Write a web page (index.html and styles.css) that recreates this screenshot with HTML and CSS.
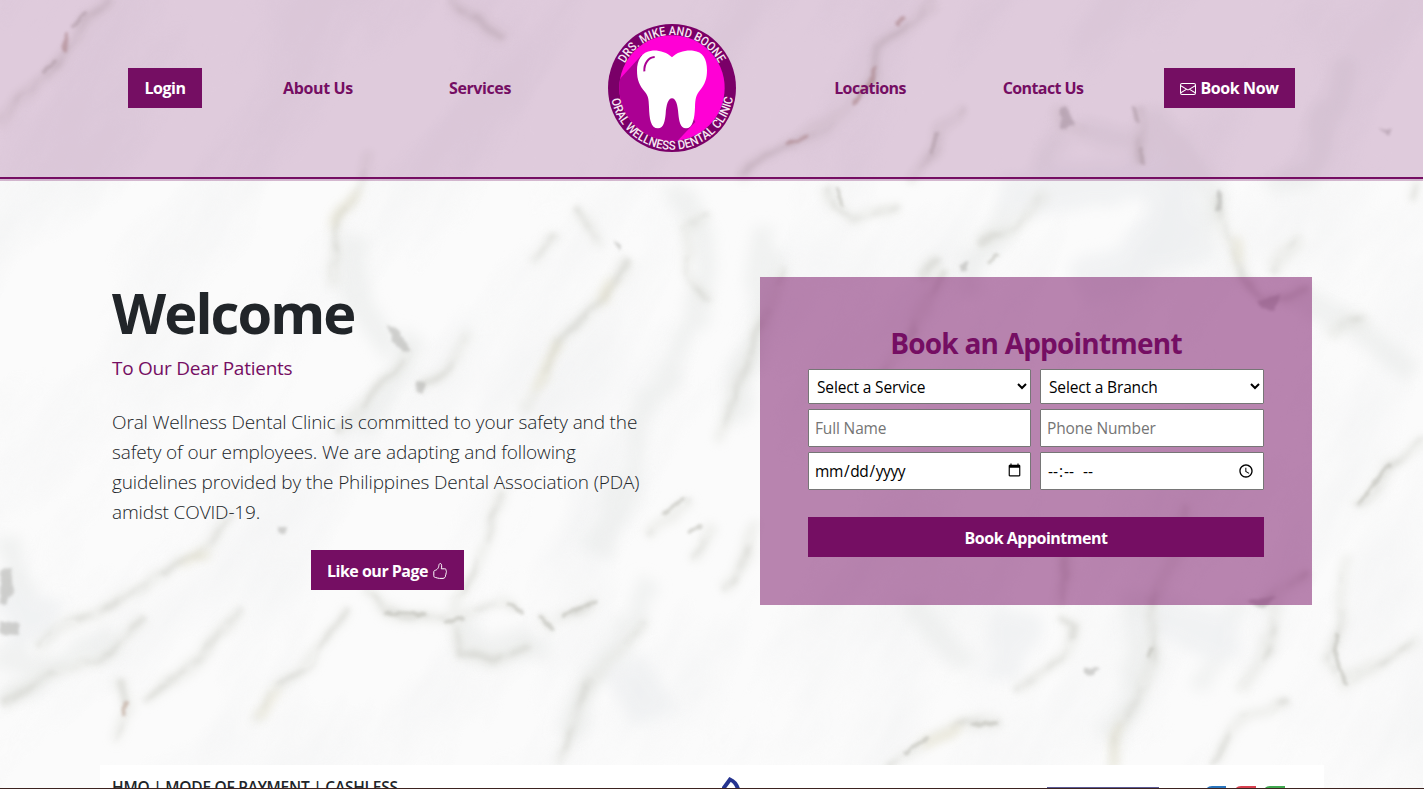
FILE: index.html
```html
<!DOCTYPE html>
<html lang="en-US">
<head>
<meta charset="utf-8">
<title>Oral Wellness Dental Clinic</title>
<link rel="stylesheet" href="styles.css">
</head>
<body>
<svg class="marble" viewBox="0 0 1424 789" preserveAspectRatio="none" aria-hidden="true">
  <defs>
    <filter id="haze" x="-10%" y="-10%" width="120%" height="120%"><feTurbulence type="fractalNoise" baseFrequency=".018" numOctaves="3" seed="4"/><feDisplacementMap in="SourceGraphic" scale="34"/><feGaussianBlur stdDeviation="7"/></filter>
    <filter id="vein" x="-10%" y="-10%" width="120%" height="120%">
      <feTurbulence type="fractalNoise" baseFrequency=".022" numOctaves="3" seed="9" result="n"/>
      <feDisplacementMap in="SourceGraphic" in2="n" scale="16" xChannelSelector="R" yChannelSelector="G"/>
      <feGaussianBlur stdDeviation="2.4" result="v"/>
      <feColorMatrix in="n" type="matrix" values="0 0 0 0 0  0 0 0 0 0  0 0 0 0 0  0 0 4.5 0 -1.75" result="m"/>
      <feComposite in="v" in2="m" operator="in"/>
    </filter>
    <filter id="halo" x="-10%" y="-10%" width="120%" height="120%"><feTurbulence type="fractalNoise" baseFrequency=".022" numOctaves="3" seed="9" result="n"/><feDisplacementMap in="SourceGraphic" in2="n" scale="20" xChannelSelector="R" yChannelSelector="G"/><feGaussianBlur stdDeviation="5"/></filter>
    <filter id="cloud" x="0" y="0" width="100%" height="100%"><feTurbulence type="fractalNoise" baseFrequency=".004 .012" numOctaves="4" seed="12"/><feColorMatrix type="matrix" values="0 0 0 0 .83  0 0 0 0 .84  0 0 0 0 .85  0 1.5 0 0 -.64"/></filter>
    <filter id="speck" x="-10%" y="-10%" width="120%" height="120%"><feTurbulence type="fractalNoise" baseFrequency=".09" numOctaves="2" seed="2" result="n"/><feDisplacementMap in="SourceGraphic" in2="n" scale="6" xChannelSelector="R" yChannelSelector="G"/><feGaussianBlur stdDeviation="1.4"/></filter>
  </defs>
  <rect width="1424" height="789" fill="#fbfbfb"/>
  <g transform="rotate(-58 712 394)"><rect x="-200" y="-500" width="1824" height="1800" filter="url(#cloud)" opacity=".7"/></g>
  <g class="haze" filter="url(#haze)">
    <path d="M350 230L355 300 390 350M680 190L705 240 695 330 640 420 600 560M420 340L360 430M770 230L760 330 730 420M1150 110L1220 200 1180 260M1060 130L1000 230 960 290M1290 290L1360 330 1410 370M10 540L20 600 5 660 60 665M650 580L600 660 570 740M460 620L480 650 550 650M1130 590L1150 660 1110 740M1240 600L1200 690M910 600L960 660M1270 190L1310 170 1350 60M1080 130L1180 150M0 700L120 640"/>
    <path class="deep" d="M1000 190L1170 180 1180 240 1080 290M1140 610L1240 640M620 660L660 720M0 610L60 620M1020 610L1000 680"/>
  </g>
  <g class="halo" filter="url(#halo)"><use href="#lines"/></g>
  <g class="vein" filter="url(#vein)"><g id="lines">
    <path d="M112 0L85 22 66 50 48 70 25 97 0 125M450 0L480 18 502 40M368 150L360 190 340 220 332 285M410 350L375 395 335 430M475 338L445 370 420 390M555 235L528 262M580 208L602 250M632 262L600 302 560 340 540 385 520 410M712 210L685 230 690 270 705 302"/>
    <path d="M938 0L905 22 880 50 874 78 850 108 835 123 800 140 770 158 740 180M968 108L945 125 930 160 910 182M1062 105L1062 128 1085 130M1140 105L1143 165M828 188L832 210 850 220 900 205M1045 192L1015 225 980 248M942 258L922 274M1222 195L1225 235 1235 262 1260 300 1312 290M1304 240L1272 272M1330 340L1345 325 1370 318M1422 180L1415 205M945 270L900 350 870 400M785 270L760 330 742 385 714 440"/>
    <path d="M235 515L200 555 140 588 90 618 35 645M0 700L60 668 110 652 145 615M120 680L125 712 112 740M140 702L200 662 240 608M348 608L310 665 272 690 252 722M365 590L385 612 430 614 455 620 510 602 522 613M540 615L555 628M560 616L597 602M505 490L480 550 460 600 456 625 462 657 492 660 530 645M690 500L650 540M645 625L600 660 575 715 560 765M712 520L690 560"/>
    <path d="M1424 440L1396 465 1360 507M1350 560L1342 590 1338 640 1330 660 1345 683 1382 665 1424 638M1150 600L1155 650 1140 690 1125 720 1108 765M1002 722L960 725 925 742 888 765M1292 696L1240 722 1212 765M1278 600L1270 650 1240 692M1062 622L1075 630 1068 652 1015 690M1190 505L1180 550 1150 610M1310 570L1260 605M760 520L740 580 722 590M1064 530L1066 605"/>
  </g></g>
  <g class="beige" filter="url(#halo)"><path d="M612 280L600 303M560 342L535 390M280 690L256 716M1125 720L1108 765M1235 240L1235 262M360 190L334 225M205 552L185 570M960 728L920 748"/></g>
  <g class="speck" filter="url(#speck)">
    <path class="fill" d="M388 326L400 331 411 350 404 352 391 338ZM415 381L426 384 424 394 416 391ZM278 526L286 526 286 534 279 534ZM0 570L12 568 14 590 6 604 0 603ZM0 620L20 624 18 635 0 634ZM1218 190L1224 193 1222 210 1217 210ZM1085 668L1100 667 1095 675 1086 674ZM960 264L969 262 968 271 961 270ZM1258 301L1280 296 1276 310 1262 309ZM1246 600L1278 597 1265 607ZM1060 108L1068 106 1075 125 1062 130ZM1380 128L1394 130 1390 137ZM615 240L621 245 619 252Z"/>
    <path d="M86 13L73 27M54 60L44 73M386 613L426 614M446 622L462 618M508 603L522 612M564 615L597 602M540 617L553 628M684 499L665 513M700 526L690 532M1390 465L1360 503M1338 635L1336 660 1347 682M997 723L974 724M928 737L908 752M1152 649L1150 655M1140 150L1145 163M1135 108L1138 120M838 188L842 205M932 153L937 135M998 255L990 262"/>
    <path class="rust" d="M67 34L65 50M898 23L903 19M876 68L870 83 855 102M126 702L123 714M788 143L807 137"/>
  </g>
</svg>

<header class="site-header">
  <nav class="nav">
    <a class="btn login">Login</a>
    <a class="link about">About Us</a>
    <a class="link services">Services</a>
    <svg class="logo" viewBox="54 41 384 384" role="img" aria-label="Clinic logo">
      <defs>
        <clipPath id="disc"><circle cx="246" cy="233" r="158"/></clipPath>
        <path id="arc-top" d="M87 233A159 159 0 0 1 405 233"/>
        <path id="arc-bottom" d="M61 233A185 185 0 0 0 431 233"/>
      </defs>
      <circle cx="246" cy="233" r="192" fill="#7a0068"/>
      <circle cx="246" cy="233" r="158" fill="#ff00d5"/>
      <path clip-path="url(#disc)" fill="#ab0093" d="M75 222L155 134 246 200 316 335 250 405H75Z"/>
      <path fill="#fff" d="M246 141C230 125 205 119 185 121C155 124 141 150 141 180C141 210 148 225 165 245C175 258 176 265 177 290C178 325 182 354 204 354C222 354 225 330 227 310C229 285 234 264 246 264C258 264 263 285 265 310C267 330 270 354 288 354C308 354 314 325 315 290C316 265 318 255 330 240C345 222 351 205 351 180C351 145 338 124 310 121C285 119 262 125 246 141Z"/>
      <path fill="none" stroke="#ab0093" stroke-width="6" d="M163 183C162 160 175 141 194 140"/>
      <text class="logo-text"><textPath href="#arc-top" startOffset="76" textLength="346" lengthAdjust="spacingAndGlyphs">DRS. MIKE AND BOONE</textPath></text>
      <text class="logo-text"><textPath href="#arc-bottom" startOffset="34" textLength="518" lengthAdjust="spacingAndGlyphs">ORAL WELLNESS DENTAL CLINIC</textPath></text>
    </svg>
    <a class="link locations">Locations</a>
    <a class="link contact">Contact Us</a>
    <a class="btn book-now"><svg class="icon" viewBox="0 0 16 16" fill="currentColor"><path d="M0 4a2 2 0 0 1 2-2h12a2 2 0 0 1 2 2v8a2 2 0 0 1-2 2H2a2 2 0 0 1-2-2V4Zm2-1a1 1 0 0 0-1 1v.217l7 4.2 7-4.2V4a1 1 0 0 0-1-1H2Zm13 2.383-4.708 2.825L15 11.105V5.383Zm-.034 6.876-5.64-3.471L8 9.583l-1.326-.795-5.64 3.47A1 1 0 0 0 2 13h12a1 1 0 0 0 .966-.741ZM1 11.105l4.708-2.897L1 5.383v5.722Z"/></svg><span>Book Now</span></a>
  </nav>
</header>

<main class="hero">
  <section class="intro">
    <h1>Welcome</h1>
    <p class="subtitle">To Our Dear Patients</p>
    <p class="lead">Oral Wellness Dental Clinic is committed to your safety and the<br>safety of our employees. We are adapting and following<br>guidelines provided by the Philippines Dental Association (PDA)<br>amidst COVID-19.</p>
    <a class="btn like"><span>Like our Page</span><svg class="icon" viewBox="0 0 16 16" fill="none" stroke="currentColor"><path d="M7.8.6C8.9.4 9.5 1 9.6 2.3C9.8 3.7 9.6 4.7 9.3 5.8H12.6C13.9 5.8 14.5 6.8 14.1 7.8C14.6 8.5 14.5 9.4 14 10C14.3 10.8 14 11.6 13.5 12.1C13.8 13.9 12.7 15.2 11 15.4H7.5C5.8 15.4 4.8 14.7 3.6 14.5C2.3 14.4 1.8 13.8 1.8 12.7V9C1.8 7.9 2.4 7.3 3.6 7.2C4.7 6.9 5.6 5.9 6.3 4.7C6.9 3.6 6.7 1.2 7.8.6Z"/></svg></a>
  </section>
  <form class="card">
    <h2>Book an Appointment</h2>
    <div class="fields">
      <select><option>Select a Service</option></select>
      <select><option>Select a Branch</option></select>
      <input type="text" placeholder="Full Name">
      <input type="text" placeholder="Phone Number">
      <input type="date">
      <input type="time">
    </div>
    <button type="button" class="btn submit">Book Appointment</button>
  </form>
</main>

<footer class="payments">
  <h3>HMO | MODE OF PAYMENT | CASHLESS</h3>
  <svg class="partners" viewBox="0 0 590 12">
    <path d="M1 12L8 2.5Q14 5 16 12" fill="none" stroke="#26348f" stroke-width="4"/>
    <path d="M325 10.5H437" stroke="#5a5a96"/>
    <path d="M484 12Q486 9 490 9H504V12Z" fill="#2a75bd"/>
    <path d="M513 12Q515 9 519 9H534V12Z" fill="#d8404f"/>
    <path d="M542 12Q544 9 548 9H563V12Z" fill="#41a951"/>
  </svg>
</footer>
<div class="edge"></div>
</body>
</html>
```

FILE: styles.css
```css
* { box-sizing: border-box; }
body {
  margin: 0;
  height: 789px;
  overflow: hidden;
  display: flex;
  flex-direction: column;
  font-family: "Open Sans", "Noto Sans", sans-serif;
  font-size: 16px;
  color: #212529;
  background: #fff;
}
h1, h2, h3, p { margin: 0; }

.marble { position: absolute; left: 0; top: 0; width: 1423px; height: 789px; z-index: -1; }
.haze { fill: none; stroke: #e9ebea; stroke-width: 24; opacity: .6; }
.haze .deep { stroke: #ebedef; stroke-width: 44; }
.vein { fill: none; stroke: #cdcec8; stroke-width: 6; opacity: .45; }
.halo { fill: none; stroke: #e2e3de; stroke-width: 12; opacity: .5; }
.beige { fill: none; stroke: #e6e2cc; stroke-width: 8; opacity: .6; }
.speck { fill: none; stroke: #bdbdb6; stroke-width: 4; opacity: .6; stroke-linecap: round; }
.speck .fill { fill: #b5b5b2; stroke: none; }
.speck .rust { stroke: #b9a092; }

.site-header {
  flex: none;
  width: 1423px;
  height: 181px;
  background: linear-gradient(#750e631a 0 0) bottom / 100% 2px no-repeat, rgba(117, 14, 99, .2);
  position: relative;
}
.site-header::after {
  content: "";
  position: absolute;
  left: 0;
  right: 0;
  top: 177px;
  height: 2px;
  background: #750e63;
}
.nav { display: flex; align-items: center; height: 176px; padding-left: 128px; font-weight: 700; }
.btn {
  display: flex;
  align-items: center;
  justify-content: center;
  height: 40px;
  padding: 0;
  border: 0;
  background: #750e63;
  color: #fff;
  font: 700 16px/24px "Open Sans", "Noto Sans", sans-serif;
  letter-spacing: -.5px;
  white-space: nowrap;
}
.link { color: #750e63; text-align: center; line-height: 24px; letter-spacing: -.6px; white-space: nowrap; }
.login { width: 74px; }
.about { width: 102px; margin-left: 65px; letter-spacing: -.35px; }
.services { width: 94px; margin-left: 64px; letter-spacing: -.4px; }
.logo { width: 128px; height: 128px; margin: 0 82px 0 81px; }
.locations { width: 104px; }
.contact { width: 112px; margin-left: 65px; }
.book-now { width: 131px; margin-left: 65px; gap: 4px; letter-spacing: -.4px; }
.icon { width: 16px; height: 16px; position: relative; top: 1px; }
.logo-text { font: 500 37px Roboto, sans-serif; fill: #f7e6f3; }

.hero { flex: none; display: flex; justify-content: space-between; height: 584px; padding: 96px 112px 0; }
.intro { width: 552px; }
h1 { font-size: 56px; line-height: 67px; margin-top: 2px; font-weight: 700; letter-spacing: -1.9px; }
.subtitle { font-size: 19px; line-height: 30px; margin-top: 7px; color: #750e63; letter-spacing: -.25px; }
.lead { font-size: 19px; line-height: 30px; font-weight: 300; margin-top: 24px; white-space: nowrap; letter-spacing: -.14px; }
.like { width: 153px; margin: 23px 0 0 199px; gap: 4px; padding-top: 1px; }
.like .icon { top: 0; }
.card { width: 552px; height: 328px; padding: 48px; background: rgba(117, 14, 99, .5); }
h2 { font-size: 28px; line-height: 34px; padding-top: 1px; text-align: center; color: #750e63; font-weight: 700; letter-spacing: -.78px; }
.fields { display: grid; grid-template-columns: 223px 224px; column-gap: 9px; grid-template-rows: 35px 38px 38px; row-gap: 5px; margin-top: 9px; }
.fields > * {
  width: 100%;
  height: 100%;
  margin: 0;
  border: 1px solid #767676;
  border-radius: 1px;
  background: #fff;
  color: #000;
  padding: 1px 6px;
  font: 400 15.5px "Open Sans", "Noto Sans", sans-serif;
  letter-spacing: -.15px;
}
.fields > select { padding: 1px 4px 0; }
.fields > [type="date"] { padding-left: 5px; letter-spacing: -.4px; }
.fields > [type="time"]::-webkit-datetime-edit-minute-field { padding-right: 3px; }
.fields > [type="time"]::-webkit-datetime-edit-ampm-field { padding-left: 4px; }
.submit { width: 456px; margin-top: 27px; padding-top: 1px; }

.payments {
  flex: none;
  display: flex;
  justify-content: space-between;
  width: 1224px;
  height: 23px;
  margin-left: 100px;
  padding: 12px 12px 0;
  overflow: hidden;
  background: #fff;
}
h3 { font-size: 15.5px; line-height: 21px; font-weight: 600; letter-spacing: -.24px; white-space: nowrap; }
.partners { width: 590px; height: 12px; flex: none; }
.edge { flex: none; height: 1px; background: #3d2320; }
```
